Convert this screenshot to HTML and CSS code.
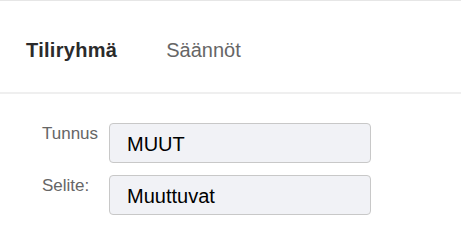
FILE: index.html
```html
<!DOCTYPE html>
<html lang="fi">
<head>
<meta charset="utf-8">
<title>Tiliryhmä</title>
<link rel="stylesheet" href="styles.css">
</head>
<body>
<div class="header">
  <nav class="tabs">
    <span class="tab active">Tiliryhmä</span>
    <span class="tab">Säännöt</span>
  </nav>
</div>
<div class="form">
  <div class="row">
    <label class="label">Tunnus</label>
    <div class="field">MUUT</div>
  </div>
  <div class="row">
    <label class="label">Selite:</label>
    <div class="field">Muuttuvat</div>
  </div>
</div>
</body>
</html>
```
FILE: styles.css
```css
html, body {
  margin: 0;
  padding: 0;
  background: #ffffff;
  font-family: "Liberation Sans", Arial, sans-serif;
}

.header {
  border-top: 1px solid #e6e6e6;
  border-bottom: 2px solid #efefef;
  height: 91px;
  box-sizing: content-box;
}

.tabs {
  display: flex;
  gap: 49px;
  padding: 38px 0 0 26px;
}

.tab {
  font-size: 20px;
  line-height: 23px;
  color: #666666;
}

.tab.active {
  font-weight: bold;
  color: #2b2b2b;
  letter-spacing: 0.3px;
}

.form {
  display: flex;
  flex-direction: column;
  gap: 12px;
  padding: 29px 0 0 42px;
}

.row {
  display: flex;
  align-items: flex-start;
}

.label {
  width: 67px;
  font-size: 17px;
  line-height: 20px;
  color: #666666;
  padding-top: 1px;
}

.field {
  width: 262px;
  height: 40px;
  box-sizing: border-box;
  border: 1px solid #c8c8c8;
  border-radius: 4px;
  background: #f1f2f6;
  padding: 9px 0 0 17px;
  font-size: 20px;
  line-height: 23px;
  color: #000000;
}
```
